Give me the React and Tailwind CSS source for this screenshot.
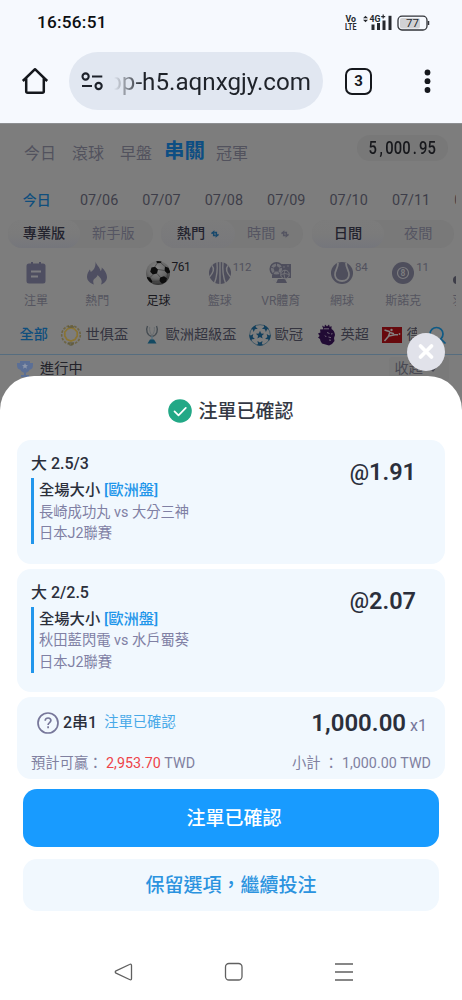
import React from "react";

const dates = ["今日", "07/06", "07/07", "07/08", "07/09", "07/10", "07/11", "07/12"];

function HomeIcon() {
  return (
    <svg className="h-8 w-8 shrink-0" viewBox="0 0 32 32" fill="none" stroke="#15181d" strokeWidth="2.5" strokeLinejoin="round">
      <path d="M3.8 16 16 4.2 28.2 16M7.2 13v13.2q0 1.500 1.500 1.500h14.600q1.500 0 1.500-1.500V13" />
    </svg>
  );
}

function TuneIcon() {
  return (
    <svg className="h-6 w-6 shrink-0" viewBox="0 0 24 24" fill="none" stroke="#1d222b" strokeWidth="2.1">
      <circle cx="5.600" cy="7.500" r="3.100" />
      <path d="M12 7.500h10.300M2 17h10" />
      <circle cx="18.600" cy="17" r="3.100" />
    </svg>
  );
}

function StatusBar() {
  return (
    <div className="flex h-[46px] items-center justify-between pl-[37px] pr-[32px]">
      <div className="text-[17.200px] font-medium leading-none tracking-[0.25px] text-[#0d0f12]">16:56:51</div>
      <div className="flex h-[18px] items-center">
        <svg className="h-[18px] w-[13px]" viewBox="0 0 13 18" fill="#26292e" fontFamily="Roboto, sans-serif" fontWeight="700" fontSize="9">
          <text x="0.500" y="8" textLength="10.500" lengthAdjust="spacingAndGlyphs">Vo</text>
          <text x="0" y="16" textLength="11.500" lengthAdjust="spacingAndGlyphs">LTE</text>
        </svg>
        <svg className="ml-[4px] h-[18px] w-[30px]" viewBox="0 0 30 18" fill="#26292e">
          <path d="M1 4.300 3.500 1.700 6 4.300zM1 5.700h5L3.500 8.300z" />
          <text x="7.500" y="7.800" fontSize="9" fontWeight="700" fontFamily="Roboto, sans-serif" textLength="11" lengthAdjust="spacingAndGlyphs">4G</text>
          <path d="M19.200 2.600h4M21.200.6v4" stroke="#26292e" strokeWidth="1.200" />
          <rect x="9.500" y="10.500" width="3" height="5.500" />
          <rect x="15" y="9" width="3" height="7" />
          <rect x="20.500" y="6.500" width="3" height="9.500" />
          <rect x="26.500" y="1.800" width="3" height="14.200" />
        </svg>
        <svg className="ml-[5px] h-[16px] w-[33px]" viewBox="0 0 33 16">
          <rect x="3" y="3" width="20" height="10.500" rx="2" fill="#d0d1d4" />
          <rect x="1" y="1.200" width="29" height="13.800" rx="4" fill="none" stroke="#303338" strokeWidth="1.300" />
          <path d="M31.500 6v4" stroke="#303338" strokeWidth="1.500" />
          <text x="15.500" y="12.300" textAnchor="middle" fontSize="11.500" fontFamily="Roboto, sans-serif" fill="#26292e">77</text>
        </svg>
      </div>
    </div>
  );
}

function BrowserBar() {
  return (
    <div className="flex h-[77px] items-start pl-[19px] pt-[6px]">
      <div className="flex h-[58px] items-center">
        <HomeIcon />
        <div className="ml-[18px] flex h-[58px] w-[254px] items-center rounded-full bg-[#e1e7f1] pl-[11px]">
          <TuneIcon />
          <div className="ml-[10px] flex w-[197px] justify-end overflow-hidden whitespace-nowrap pt-[2px] text-[24.200px] leading-[34px] text-[#1f232a] [mask-image:linear-gradient(to_right,transparent,black_28px)]">
            pp-h5.aqnxgjy.com
          </div>
        </div>
        <div className="ml-[22px] flex h-[27px] w-[27px] items-center justify-center rounded-[7px] border-[2.600px] border-[#15181d] text-[15px] font-bold text-[#15181d]">3</div>
        <svg className="ml-[49px] h-7 w-[14px]" viewBox="0 0 14 28" fill="#15181d">
          <circle cx="6.500" cy="5.500" r="2.900" />
          <circle cx="6.500" cy="14.200" r="2.900" />
          <circle cx="6.500" cy="23" r="2.900" />
        </svg>
      </div>
    </div>
  );
}

function SwapIcon({ className }) {
  return (
    <svg className={className} viewBox="0 0 9 9" fill="none" stroke="currentColor" strokeWidth="1.700">
      <path d="M.5 4 3 2v4.200h2M8.500 5 6 7V2.800H4" />
    </svg>
  );
}

function ListIcon() {
  return (
    <svg className="h-6 w-6" viewBox="0 0 24 24">
      <path fill="#4e4e61" d="M5 2.500h2V1h2v1.500h6V1h2v1.500h2q2.500 0 2.500 2.500v15q0 2.500-2.500 2.500H5Q2.500 22.500 2.500 20V5q0-2.500 2.500-2.500z" />
      <path stroke="#7c7c80" strokeWidth="2" d="M7 10.500h10M7 15.500h7" />
    </svg>
  );
}

function FlameIcon() {
  return (
    <svg className="h-6 w-6" viewBox="0 0 24 24">
      <path fill="#4e4e61" d="M10.500.5c1 4 4.500 5.500 5 9.500 1-.6 1.400-2 1.200-3.500 3 2.500 5.300 6 5.300 9.500 0 3.500-2.300 6.200-6 7.500 1.700-3 .4-6.300-3.500-9.500-.3 2.700-4.300 3.500-4.300 6.500 0 1.200.3 2.200.8 3-4-1-7-4-7-7.700 0-3.100 1.600-5 2.700-7.300.7 1 .9 1.700 1 2.500C9 9.500 11 5 10.500.5z" />
    </svg>
  );
}

function FootballIcon() {
  return (
    <svg className="h-[26px] w-[26px]" viewBox="0 0 26 26">
      <defs>
        <radialGradient id="ball" cx="45%" cy="30%" r="70%">
          <stop offset="0" stopColor="#858585" />
          <stop offset=".6" stopColor="#686868" />
          <stop offset="1" stopColor="#303030" />
        </radialGradient>
        <clipPath id="ballClip"><circle cx="13" cy="13" r="12" /></clipPath>
      </defs>
      <circle cx="13" cy="13" r="12" fill="url(#ball)" />
      <g clipPath="url(#ballClip)">
        <path fill="#0c0c0c" d="m6.500 7.500 3.500-.8 3 2.800-1 4-4.200 1-2.600-2.800zM15 17.500l4-1.300 3 2-1 4-4 1.300-2.500-2.500zM20 6.500l3.500 1.200 2 4.500-3 1.500-3-3zM2 17l3 .5 2.500 4-2 2.500L1 21zM11 0l6 .5-1 2.500-4 .3z" />
        <path stroke="#3c3c3c" strokeWidth=".7" fill="none" d="m13 9.500 6.500 1M8 14.500l-3 3M12 13.500l3.500 4M10 6.700 12 3.300M16 3l4 3.500M22.500 13.700 22 18M7.500 21.500l7-.5" />
      </g>
    </svg>
  );
}

function BasketballIcon() {
  return (
    <svg className="h-6 w-6" viewBox="0 0 24 24">
      <circle cx="12" cy="12" r="11" fill="#4e4e5c" />
      <path stroke="#7c7c7e" strokeWidth="1.400" fill="none" d="M12 1v22M9 1Q10 13 6.500 22M15 1q-1 12 2.500 21M4 4.500Q8 9 1 16.500M20 4.500q-4 4.500 3 12" />
    </svg>
  );
}

function VrIcon() {
  return (
    <svg className="h-6 w-6" viewBox="0 0 24 24">
      <path fill="#4e4e5c" d="M11 3h11v14H3v-3h8zM9 18h7l2 4H7z" />
      <circle cx="7.500" cy="8" r="6.300" fill="#717177" stroke="#4e4e5c" strokeWidth="1.500" />
      <path fill="#4e4e5c" d="m7.500 4.800 3 2.200-1.100 3.500H5.600L4.500 7z" />
      <path stroke="#4e4e5c" d="M7.500 4.800V2M10.500 7l3-1M9.400 10.500l2 2.800M5.600 10.500l-2 2.800M4.500 7l-3-1" />
      <circle cx="16" cy="13.500" r="4.300" fill="#4e4e5c" stroke="#77777b" />
      <path stroke="#77777b" strokeWidth=".8" fill="none" d="M12 13.500q4-2 8 0M16 9q-2 4 0 9M14 6h2M18 5h2M4 19l4 2" />
    </svg>
  );
}

function TennisIcon() {
  return (
    <svg className="h-6 w-6" viewBox="0 0 24 24">
      <circle cx="12" cy="12" r="11" fill="#4e4e5c" />
      <path stroke="#7c7c7e" strokeWidth="1.800" fill="none" d="M8 2C8 8 4.500 9.500 5 14c.5 8 13.500 8 14 0 .5-4.500-3-6-3-12" />
    </svg>
  );
}

function SnookerIcon() {
  return (
    <svg className="h-6 w-6" viewBox="0 0 24 24">
      <circle cx="12" cy="12" r="11" fill="#4e4e5c" />
      <circle cx="12" cy="12" r="5.500" fill="none" stroke="#7c7c7e" strokeWidth="1.200" />
      <text x="12" y="15" textAnchor="middle" fontSize="8.500" fontWeight="700" fontFamily="Roboto, sans-serif" fill="#7c7c7e">8</text>
    </svg>
  );
}

function ShuttleIcon() {
  return (
    <svg className="h-6 w-6" viewBox="0 0 24 24">
      <circle cx="5" cy="19" r="4" fill="#3d3d48" />
      <path fill="#4e4e5c" d="M6 14 16 2l6 6-12 10z" />
    </svg>
  );
}

const sports = [
  { name: "注單", Icon: ListIcon },
  { name: "熱門", Icon: FlameIcon },
  { name: "足球", Icon: FootballIcon, count: "761", active: true },
  { name: "籃球", Icon: BasketballIcon, count: "112" },
  { name: "VR體育", Icon: VrIcon },
  { name: "網球", Icon: TennisIcon, count: "84" },
  { name: "斯諾克", Icon: SnookerIcon, count: "11" },
  { name: "羽球", Icon: ShuttleIcon },
];

function WreathIcon() {
  return (
    <svg className="h-[22px] w-[22px] shrink-0" viewBox="0 0 22 22" fill="none">
      <circle cx="11" cy="11" r="9.300" stroke="#6e6543" strokeWidth="1.600" strokeDasharray="2.600 1.300" />
      <path stroke="#8a7433" strokeWidth="1.700" d="M11 3.800 14.500 5l2.700 3v4L15 15.500 11 17l-4-1.500L4.800 12V8l2.700-3z" />
      <path stroke="#55502f" strokeWidth="1.200" d="M8 19h6M9.500 21h3M8 3h6" />
    </svg>
  );
}

function SuperCupIcon() {
  return (
    <svg className="h-[20px] w-[14px] shrink-0" viewBox="0 0 14 20" fill="none">
      <path stroke="#454c52" strokeWidth="1.400" d="M2.500 1C.5 5 2 10.500 7 11.500M11.500 1c2 4 .5 9.500-4.500 10.500" />
      <path stroke="#686d70" d="M4.700 2c-.5 3.500.5 6.500 2.300 8.500M9.300 2c.5 3.500-.5 6.500-2.300 8.500" />
      <path stroke="#58707e" strokeWidth="1.500" d="M7 11v4.500" />
      <path fill="#124962" d="M5 14.500h4l2.500 4h-9z" />
    </svg>
  );
}

function StarBallIcon() {
  return (
    <svg className="h-[22px] w-[22px] shrink-0" viewBox="0 0 22 22" fill="#133f5c">
      <defs>
        <clipPath id="starBallClip"><circle cx="11" cy="11" r="10.700" /></clipPath>
        <path id="star" d="M0-4.300 1.200-1.500 4.100-1.300 1.900.7 2.600 3.600 0 2-2.600 3.600-1.900.7-4.100-1.300-1.200-1.500z" />
      </defs>
      <circle cx="11" cy="11" r="10.300" fill="none" stroke="#2c4d62" strokeWidth=".7" />
      <g clipPath="url(#starBallClip)">
        <use href="#star" x="11" y="11" />
        <use href="#star" transform="translate(4.700 3.500) rotate(35)" />
        <use href="#star" transform="translate(17 3.500) rotate(-35)" />
        <use href="#star" transform="translate(20.300 13.500) rotate(35)" />
        <use href="#star" transform="translate(11 20.500) rotate(36)" />
        <use href="#star" transform="translate(1.700 13.500) rotate(-35)" />
      </g>
    </svg>
  );
}

function LionIcon() {
  return (
    <svg className="h-[22px] w-[18px] shrink-0" viewBox="0 0 18 22">
      <path fill="#210b34" d="M4 1.500 6.500 3 7 .5l2 2L11 .5l.8 2.500 1.700-1v3C15.500 6 16.700 8 17 11l-1 3 .5 3-2.500 3-3 1.500-7-2L2.500 17l-.5-2L0 13.500 1.700 12 0 9.500l2.500-1L2 5.500l3.500-.2z" />
      <path stroke="#77707c" strokeWidth=".9" fill="none" d="m9 8.500 2.500 1M13 10l1.500-.3M10.500 13l2.500.7M11 16l2 .3M7 11.500l1.200 1.500M6 4.800h5" />
    </svg>
  );
}

function BundesligaIcon() {
  return (
    <svg className="h-[16px] w-[20px] shrink-0" viewBox="0 0 20 16">
      <path fill="#67090d" d="M0 0h20v16H0z" />
      <path stroke="#858080" strokeWidth="1.500" fill="none" d="M2.500 3 8 4.800M8 5 6.300 9.500 2.500 14M7 9l6-1.200h3M8 5.500l4 1.200" />
      <circle cx="9.500" cy="3" r="1.200" fill="#858080" />
      <circle cx="17.500" cy="7" r=".9" fill="#858080" />
    </svg>
  );
}

function LeagueRow() {
  return (
    <div className="flex h-[38px] items-center pl-[19.500px] text-[14.200px] whitespace-nowrap text-[#34343f]">
      <span className="w-[40px] font-medium text-[#0f4e7d]">全部</span>
      <WreathIcon />
      <span className="ml-[4px] w-[59px]">世俱盃</span>
      <SuperCupIcon />
      <span className="ml-[7px] w-[83px]">歐洲超級盃</span>
      <StarBallIcon />
      <span className="ml-[4px] w-[43px]">歐冠</span>
      <LionIcon />
      <span className="ml-[5px] w-[41px]">英超</span>
      <BundesligaIcon />
      <span className="ml-[5px] w-[10px] overflow-hidden">德甲</span>
      <svg className="ml-[11px] h-[19px] w-[19px] shrink-0" viewBox="0 0 19 19" fill="none" stroke="#0f5a85" strokeWidth="1.700">
        <circle cx="8.500" cy="8" r="6.500" />
        <path d="m13 13 4.500 4.500" />
      </svg>
    </div>
  );
}

function Backdrop() {
  return (
    <div className="h-[260px] overflow-hidden border-t border-[#8d8f92] bg-[#7d7d7d]">
      <div className="flex h-[59px] items-center pl-6 text-[16px] text-[#52525d]">
        <span className="w-12">今日</span>
        <span className="w-12">滾球</span>
        <span className="w-11">早盤</span>
        <span className="w-[52px] pb-[5px] text-[20.500px] font-bold text-[#0d4e83]">串關</span>
        <span>冠軍</span>
        <div className="mb-[12px] ml-[109px] flex h-[26px] w-[91px] items-center justify-center rounded-full bg-[#787878] text-[18px] font-medium text-[#17181c]">
          <div className="flex scale-x-[0.82]">
            {"5,000.95".split("").map((c, i) => (
              <span key={i} className="w-[10.300px] text-center">{c}</span>
            ))}
          </div>
        </div>
      </div>
      <div className="mr-[6px] flex h-[35px] items-center overflow-hidden pl-[5.500px]">
        {dates.map((d, i) => (
          <span
            key={d}
            className={i === 0 ? "w-[62.400px] shrink-0 text-center text-[14px] font-medium text-[#0f4e7d]" : "w-[62.400px] shrink-0 text-center text-[14.400px] text-[#3d3d49]"}
          >
            {d}
          </span>
        ))}
      </div>
      <div className="flex h-8 items-center pl-2 text-[14.200px]">
        <div className="flex h-7 w-[145px] items-center rounded-full bg-[#797979]">
          <span className="flex h-7 w-[72px] items-center justify-center rounded-full bg-gradient-to-b from-[#7c7c7c] via-[#7b7b7b] to-[#75767c] font-medium text-[#23232e]">專業版</span>
          <span className="ml-[12px] text-[#555562]">新手版</span>
        </div>
        <div className="ml-2 flex h-7 w-[142px] items-center rounded-full bg-[#797979]">
          <span className="flex h-7 w-[74px] items-center justify-center gap-[6px] rounded-full bg-gradient-to-b from-[#7c7c7c] to-[#78787b] font-medium text-[#23232e]">
            熱門 <SwapIcon className="h-2 w-2 text-[#17486c]" />
          </span>
          <span className="ml-[12px] flex items-center gap-[6px] text-[#555562]">
            時間 <SwapIcon className="h-2 w-2" />
          </span>
        </div>
        <div className="ml-[9px] flex h-7 w-[142px] items-center rounded-full bg-[#797979]">
          <span className="flex h-7 w-[72px] items-center justify-center rounded-full bg-gradient-to-b from-[#7c7c7c] via-[#7b7b7b] to-[#75767c] font-medium text-[#23232e]">日間</span>
          <span className="ml-[20px] text-[#555562]">夜間</span>
        </div>
      </div>
      <div className="mr-[6px] flex h-[66px] overflow-hidden pl-[5.500px]">
        {sports.map(({ name, Icon, count, active }) => (
          <div key={name} className="flex w-[61.200px] shrink-0 flex-col items-center pt-[10px]">
            <div className="relative flex h-[26px] items-center">
              <Icon />
              {count && (
                <span className={active ? "absolute left-full top-[2px] ml-0 text-[12px] leading-[10px] tracking-[-0.500px] text-[#18181d]" : "absolute left-full top-[2px] ml-[1px] text-[11.500px] leading-[10px] tracking-[-0.300px] text-[#51515d]"}>{count}</span>
              )}
            </div>
            <span className={active ? "mt-[6px] text-[12px] leading-[18px] text-[#18181d]" : "mt-[6px] whitespace-nowrap text-[12px] leading-[18px] text-[#555560]"}>{name}</span>
          </div>
        ))}
      </div>
      <LeagueRow />
      <div className="flex h-[29px] items-center border-t border-[#566d7f] pl-4 text-[14.200px] text-[#222229]">
        <svg className="h-[17px] w-[18px]" viewBox="0 0 18 17" fill="#5b6f96">
          <path d="M4 0h10v2h3v2c0 3-1.500 4.500-3.500 4.800-.8 1.700-2 2.600-3.500 2.900V14h3v2H5v-2h3v-2.300C6.500 11.400 5.300 10.500 4.500 8.800 2.500 8.500 1 7 1 4V2h3z" />
          <path fill="#8c96aa" d="m9 2 .9 2 2.100.2-1.600 1.400.5 2.100L9 6.600 7.100 7.700l.5-2.100L6 4.200 8.100 4z" />
        </svg>
        <span className="ml-[6px]">進行中</span>
        <span className="ml-[306px] flex h-6 w-[60px] items-center gap-1 rounded bg-[#7a7a7a] pl-[6px] text-[#484852]">收起
          <svg className="h-2 w-3" viewBox="0 0 12 8" fill="#45454f"><path d="M2 2h8L6 7z" /></svg>
        </span>
      </div>
    </div>
  );
}

function SelectionCard({ title, teams, odds }) {
  return (
    <div className="flex h-[123.500px] justify-between rounded-[14px] bg-[#f1f8fe] pl-[14px] pr-[29px] pt-[13px]">
      <div>
        <div className="text-[16px] font-medium leading-[22px] text-[#2b2f3b]">{title}</div>
        <div className="mt-[3px] h-[66px] border-l-[3px] border-[#2196ec] pl-[5px] pt-[1px] text-[14.300px] leading-[21.700px] text-[#8080a4]">
          <div className="text-[15.300px] font-medium leading-[22.600px] text-[#2b2f3b]">
            全場大小 <span className="text-[#1f96ea]">[歐洲盤]</span>
          </div>
          <div>{teams}</div>
          <div>日本J2聯賽</div>
        </div>
      </div>
      <div className="flex h-[40px] items-center text-[23.500px] font-semibold text-[#2b2f3b]">
        <span className="text-[21.500px] font-medium">@</span>{odds}
      </div>
    </div>
  );
}

function Sheet() {
  return (
    <div className="absolute inset-x-0 bottom-0 flex h-[624px] flex-col rounded-t-[34px] bg-white px-[17px]">
      <div className="absolute -top-[43px] right-[17px] flex h-[38px] w-[38px] items-center justify-center rounded-full bg-[#e1e2ea]">
        <svg className="h-[18px] w-[18px]" viewBox="0 0 18 18" stroke="#fff" strokeWidth="3.800" strokeLinecap="round">
          <path d="m3.500 3 11 11M14.500 3l-11 11" />
        </svg>
      </div>
      <div className="flex h-16 items-center justify-center gap-[6px] pt-[6px]">
        <svg className="h-6 w-6" viewBox="0 0 24 24" fill="none">
          <circle cx="12" cy="12" r="11.800" fill="#22a886" />
          <path stroke="#fff" strokeWidth="1.700" strokeLinecap="round" strokeLinejoin="round" d="m6.500 12.300 4 4 7.300-7.500" />
        </svg>
        <span className="pt-[2px] text-[19px] font-medium text-[#343844]">注單已確認</span>
      </div>
      <div className="flex flex-col gap-[5px]">
        <SelectionCard title="大 2.5/3" teams="長崎成功丸 vs 大分三神" odds="1.91" />
        <SelectionCard title="大 2/2.5" teams="秋田藍閃電 vs 水戶蜀葵" odds="2.07" />
        <div className="h-[82px] rounded-[14px] bg-[#f1f8fe] px-[14px]">
          <div className="flex h-[52px] items-center pl-[6px] pr-[3px]">
            <svg className="h-[22px] w-[22px]" viewBox="0 0 22 22" fill="none" stroke="#77779a" strokeWidth="1.700">
              <circle cx="11" cy="11" r="10" />
              <path d="M8.200 8.700c0-3.700 5.700-3.500 5.700-.1 0 2-2.800 2-2.800 4.300M11.100 14.300v1.900" />
            </svg>
            <span className="ml-[4px] text-[16px] font-medium text-[#2b2f3b]">2串1</span>
            <span className="ml-[7px] text-[14.300px] text-[#48a9e8]">注單已確認</span>
            <span className="ml-auto text-[24px] font-semibold text-[#2b2f3b]">1,000.00</span>
            <span className="ml-[4px] pr-[1px] pt-[5px] text-[16px] text-[#77779a]">x1</span>
          </div>
          <div className="flex h-[29px] items-center justify-between pt-[1px] text-[14.300px] text-[#8080a0]">
            <span>預計可贏： <span className="text-[#ee4349]">2,953.70</span> TWD</span>
            <span>小計 ： 1,000.00 TWD</span>
          </div>
        </div>
      </div>
      <button className="mx-[6px] mt-[10px] flex h-[58px] shrink-0 items-center justify-center rounded-[14px] bg-[#189bff] pl-[6px] pt-[2px] text-[19px] font-medium text-white">注單已確認</button>
      <button className="mx-[6px] mt-[12px] flex h-[52px] shrink-0 items-center justify-center rounded-[14px] bg-[#f1f8fe] pt-[2px] text-[19px] font-medium text-[#2b93df]">保留選項，繼續投注</button>
      <div className="mt-[51px] flex items-center gap-[90px] pl-[97px]">
        <svg className="h-5 w-5" viewBox="0 0 20 20" fill="none" stroke="#606060" strokeWidth="1.300" strokeLinejoin="round">
          <path d="M15.500 2.500Q17.500 1.500 17.500 3.500v13q0 2-2 1L2 11.200q-1.500-1.200 0-2.400z" />
        </svg>
        <svg className="h-5 w-5" viewBox="0 0 20 20" fill="none" stroke="#606060" strokeWidth="1.300">
          <rect x="1.500" y="1.500" width="16.500" height="16.500" rx="3.500" />
        </svg>
        <svg className="h-5 w-5" viewBox="0 0 20 20" fill="none" stroke="#606060" strokeWidth="1.500">
          <path d="M1 2h18M1 10h18M1 18h18" />
        </svg>
      </div>
    </div>
  );
}

export default function App() {
  return (
    <div className="relative h-[1000px] w-[462px] overflow-hidden bg-[#7d7d7d] font-[Roboto,'Noto_Sans_CJK_TC',sans-serif]">
      <div className="bg-[#f6f9fe]">
        <StatusBar />
        <BrowserBar />
      </div>
      <Backdrop />
      <Sheet />
    </div>
  );
}
